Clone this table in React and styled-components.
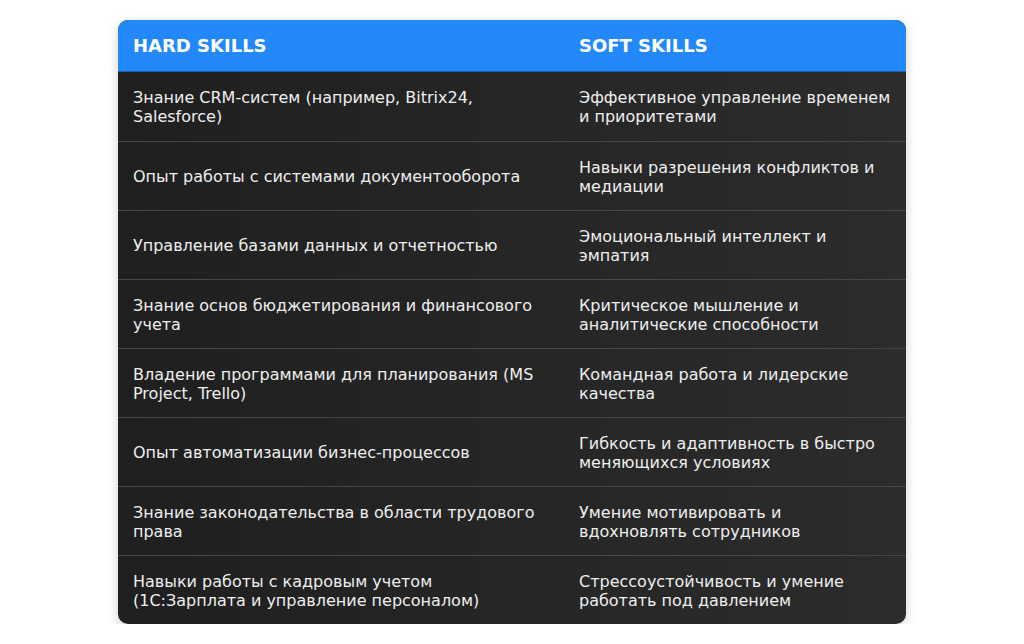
import React from 'react';
import styled, { createGlobalStyle } from 'styled-components';

const rows = [
  ['Знание CRM-систем (например, Bitrix24, Salesforce)', 'Эффективное управление временем и приоритетами'],
  ['Опыт работы с системами документооборота', 'Навыки разрешения конфликтов и медиации'],
  ['Управление базами данных и отчетностью', 'Эмоциональный интеллект и эмпатия'],
  ['Знание основ бюджетирования и финансового учета', 'Критическое мышление и аналитические способности'],
  ['Владение программами для планирования (MS Project, Trello)', 'Командная работа и лидерские качества'],
  ['Опыт автоматизации бизнес-процессов', 'Гибкость и адаптивность в быстро меняющихся условиях'],
  ['Знание законодательства в области трудового права', 'Умение мотивировать и вдохновлять сотрудников'],
  ['Навыки работы с кадровым учетом (1С:Зарплата и управление персоналом)', 'Стрессоустойчивость и умение работать под давлением'],
];

const GlobalStyle = createGlobalStyle`
  body {
    margin: 0;
    background: #ffffff;
    font-family: "DejaVu Sans", sans-serif;
  }
`;

const Page = styled.div`
  display: flex;
  justify-content: center;
  padding-top: 20px;
`;

const Table = styled.div`
  width: 788px;
  display: grid;
  grid-template-columns: 446px 342px;
  border-radius: 10px;
  overflow: hidden;
  background: linear-gradient(to right, #1f1f1f, #2c2c2c);
  box-shadow: 0 4px 12px rgba(0, 0, 0, 0.18);
`;

const HeadCell = styled.div`
  height: 52px;
  box-sizing: border-box;
  display: flex;
  align-items: center;
  padding: 0 15px;
  background: #2389fb;
  border-bottom: 1px solid #1c5ea8;
  color: #ffffff;
  font-weight: bold;
  font-size: 18px;
  text-transform: uppercase;
`;

const Cell = styled.div`
  height: 69px;
  box-sizing: border-box;
  display: flex;
  align-items: center;
  padding: 1px 15px 0;
  border-top: ${(p) => (p.first ? 'none' : '1px solid #464646')};
  color: #eeeeee;
  font-size: 16px;
  line-height: 19px;
`;

export default function App() {
  return (
    <>
      <GlobalStyle />
      <Page>
        <Table>
          <HeadCell>Hard Skills</HeadCell>
          <HeadCell>Soft Skills</HeadCell>
          {rows.map(([hard, soft], i) => (
            <React.Fragment key={i}>
              <Cell first={i === 0}>{hard}</Cell>
              <Cell first={i === 0}>{soft}</Cell>
            </React.Fragment>
          ))}
        </Table>
      </Page>
    </>
  );
}
